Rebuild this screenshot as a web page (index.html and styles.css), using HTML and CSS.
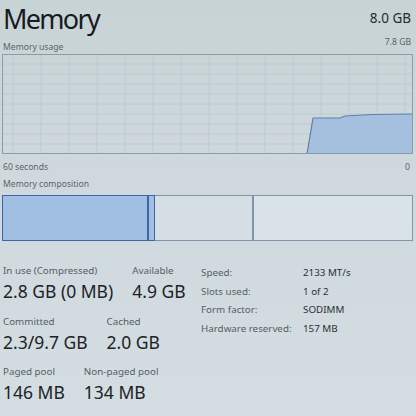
FILE: index.html
```html
<!DOCTYPE html>
<html lang="en">
<head>
<meta charset="utf-8">
<title>Memory</title>
<link rel="stylesheet" href="styles.css">
</head>
<body>
<main class="mem">
  <header class="head">
    <h1 class="title">Memory</h1>
    <span class="total">8.0 GB</span>
  </header>
  <div class="caption top">
    <span>Memory usage</span>
    <span class="max">7.8 GB</span>
  </div>
  <svg class="graph" width="411" height="100" viewBox="0 0 411 100">
    <g class="grid">
      <line x1="0" y1="10" x2="411" y2="10"/><line x1="0" y1="20" x2="411" y2="20"/>
      <line x1="0" y1="30" x2="411" y2="30"/><line x1="0" y1="40" x2="411" y2="40"/>
      <line x1="0" y1="50" x2="411" y2="50"/><line x1="0" y1="60" x2="411" y2="60"/>
      <line x1="0" y1="70" x2="411" y2="70"/><line x1="0" y1="80" x2="411" y2="80"/>
      <line x1="0" y1="90" x2="411" y2="90"/>
      <line x1="11" y1="0" x2="11" y2="100"/><line x1="39" y1="0" x2="39" y2="100"/>
      <line x1="67" y1="0" x2="67" y2="100"/><line x1="95" y1="0" x2="95" y2="100"/>
      <line x1="123" y1="0" x2="123" y2="100"/><line x1="151" y1="0" x2="151" y2="100"/>
      <line x1="179" y1="0" x2="179" y2="100"/><line x1="207" y1="0" x2="207" y2="100"/>
      <line x1="235" y1="0" x2="235" y2="100"/><line x1="263" y1="0" x2="263" y2="100"/>
      <line x1="291" y1="0" x2="291" y2="100"/><line x1="319" y1="0" x2="319" y2="100"/>
      <line x1="347" y1="0" x2="347" y2="100"/><line x1="375" y1="0" x2="375" y2="100"/>
      <line x1="403" y1="0" x2="403" y2="100"/>
    </g>
    <polygon class="area" points="305,100 311,64 338,64 343,62 370,60.5 411,60 411,100"/>
    <polyline class="trace" points="305,100 311,64 338,64 343,62 370,60.5 411,60"/>
    <rect class="frame" x="0.5" y="0.5" width="410" height="99"/>
  </svg>
  <div class="caption bottom">
    <span>60 seconds</span>
    <span>0</span>
  </div>
  <div class="caption comp-label">Memory composition</div>
  <div class="comp">
    <div class="seg inuse"></div>
    <div class="seg modified"></div>
    <div class="seg standby"></div>
    <div class="seg free"></div>
  </div>
  <section class="stats">
    <div class="figures">
      <div class="frow">
        <div class="stat"><div class="lbl">In use (Compressed)</div><div class="val">2.8 GB (0 MB)</div></div>
        <div class="stat"><div class="lbl">Available</div><div class="val">4.9 GB</div></div>
      </div>
      <div class="frow">
        <div class="stat"><div class="lbl">Committed</div><div class="val">2.3/9.7 GB</div></div>
        <div class="stat"><div class="lbl">Cached</div><div class="val">2.0 GB</div></div>
      </div>
      <div class="frow">
        <div class="stat"><div class="lbl">Paged pool</div><div class="val">146 MB</div></div>
        <div class="stat"><div class="lbl">Non-paged pool</div><div class="val">134 MB</div></div>
      </div>
    </div>
    <dl class="specs">
      <dt>Speed:</dt><dd>2133 MT/s</dd>
      <dt>Slots used:</dt><dd>1 of 2</dd>
      <dt>Form factor:</dt><dd>SODIMM</dd>
      <dt>Hardware reserved:</dt><dd>157 MB</dd>
    </dl>
  </section>
</main>
</body>
</html>
```

FILE: styles.css
```css
* { box-sizing: border-box; }
html, body { margin: 0; padding: 0; }
body {
  width: 416px;
  height: 416px;
  overflow: hidden;
  background: linear-gradient(180deg, #c8d3d6 0%, #cfd9dd 40%, #d3dde2 100%);
  font-family: "Noto Sans", "Open Sans", sans-serif;
  color: #22282c;
}
.mem {
  padding: 0 3px 0 2px;
  display: flex;
  flex-direction: column;
}
.head {
  display: flex;
  justify-content: space-between;
  align-items: flex-start;
  height: 40px;
}
.title {
  margin: 0;
  font-weight: 400;
  font-size: 27px;
  line-height: 38px;
  padding-left: 1px;
  color: #171b1f;
  letter-spacing: -1.7px;
}
.total {
  font-size: 13.5px;
  line-height: 14px;
  margin-top: 11px;
  margin-right: 2px;
  color: #262b2f;
}
.caption {
  display: flex;
  justify-content: space-between;
  font-size: 8.6px;
  color: #5c6468;
  padding-left: 1px;
}
.caption.top { height: 14px; line-height: 14px; align-items: flex-start; }
.caption.top .max { margin-top: -5px; margin-right: 2px; }
.graph { display: block; }
.grid line { stroke: #bccad1; stroke-width: 1; }
.area { fill: #a5c0de; }
.trace { fill: none; stroke: #5a82ae; stroke-width: 1.2; }
.frame { fill: none; stroke: #8c9ca6; stroke-width: 1; }
.caption.bottom { height: 20px; line-height: 20px; margin-top: 3px; padding-right: 3px; }
.caption.comp-label { height: 18px; line-height: 14px; }
.comp {
  display: flex;
  height: 46px;
  width: 411px;
}
.seg { height: 100%; border: 1.5px solid #7f94a8; }
.inuse { width: 146px; background: #a0bfe2; border-color: #3d67a3; }
.modified { width: 7px; background: #a0bfe2; border-color: #3d67a3; border-left-width: 1px; }
.standby { width: 98px; background: #d4dee3; border-left: none; }
.free { width: 160px; background: #d9e2e6; border-left-width: 1.5px; }
.stats {
  display: flex;
  margin-top: 23px;
}
.figures {
  width: 199px;
  display: flex;
  flex-direction: column;
  gap: 9.5px;
  padding-left: 1px;
}
.frow { display: flex; gap: 19px; }
.lbl { font-size: 9.8px; line-height: 13px; color: #565e63; }
.val { font-size: 17.5px; line-height: 28px; color: #1d2226; }
.specs {
  margin: 0;
  display: grid;
  grid-template-columns: 102px auto;
  row-gap: 0;
  font-size: 9.8px;
  line-height: 18.5px;
  color: #565e63;
  align-content: start;
}
.specs dt { margin: 0; }
.specs dd { margin: 0; color: #2a2f33; }
```
